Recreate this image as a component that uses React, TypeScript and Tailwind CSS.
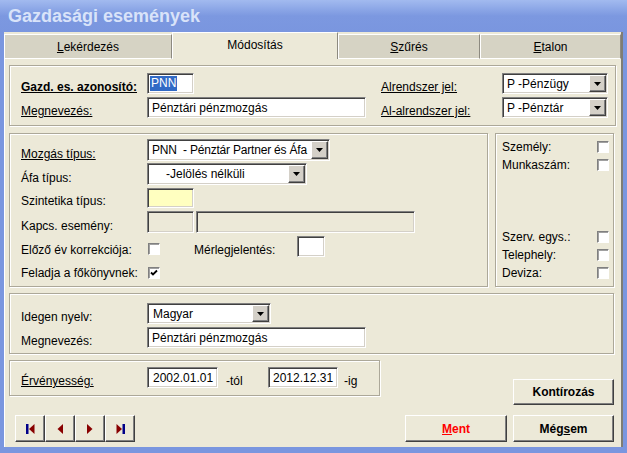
import React from "react";

const sunken =
  "border border-t-[#808080] border-l-[#808080] border-b-white border-r-white shadow-[inset_1px_1px_0_#404040,inset_-1px_-1px_0_#d4d0c8]";
const raised =
  "border border-t-white border-l-white border-b-[#404040] border-r-[#404040] shadow-[inset_-1px_-1px_0_#808080]";
const box =
  "border border-[#aca899] shadow-[inset_1px_1px_0_#ffffff,1px_1px_0_#ffffff]";

function Field({ cls, children }: { cls: string; children?: React.ReactNode }) {
  return (
    <div
      className={`${sunken} ${cls} shrink-0 flex items-center overflow-hidden whitespace-nowrap leading-[14px]`}
    >
      {children}
    </div>
  );
}

function Arrow() {
  return (
    <div
      className={`${raised} w-[17px] h-full bg-[#d4d0c8] flex items-center justify-center shrink-0`}
    >
      <svg width="7" height="4" viewBox="0 0 7 4">
        <polygon points="0,0 7,0 3.5,4" fill="#000" />
      </svg>
    </div>
  );
}

function Select({
  cls,
  pad,
  children,
}: {
  cls: string;
  pad: string;
  children: React.ReactNode;
}) {
  return (
    <div
      className={`${sunken} ${cls} bg-white p-[1px] shrink-0 flex items-stretch overflow-hidden whitespace-nowrap leading-[14px]`}
    >
      <div className={`flex-1 min-w-0 overflow-hidden flex items-center ${pad}`}>
        {children}
      </div>
      <Arrow />
    </div>
  );
}

function Label({ cls, children }: { cls: string; children: React.ReactNode }) {
  return (
    <span className={`${cls} leading-[14px] whitespace-nowrap shrink-0`}>
      {children}
    </span>
  );
}

function Check({ cls, checked }: { cls: string; checked?: boolean }) {
  return (
    <div
      className={`${cls} w-[12px] h-[12px] shrink-0 bg-white border border-t-[#808080] border-l-[#808080] border-b-white border-r-white shadow-[inset_1px_1px_0_#a0a0a0] flex items-center justify-center`}
    >
      {checked && (
        <svg width="8" height="8" viewBox="0 0 8 8">
          <polyline
            points="1,3.5 3,5.5 7,1.5"
            fill="none"
            stroke="#000"
            strokeWidth="1.8"
          />
        </svg>
      )}
    </div>
  );
}

function CheckRow({ label }: { label: string }) {
  return (
    <div className="flex items-center justify-between h-[18px]">
      <span className="leading-[14px]">{label}</span>
      <Check cls="" />
    </div>
  );
}

function Button({ cls, children }: { cls: string; children: React.ReactNode }) {
  return (
    <div
      className={`${raised} ${cls} shrink-0 bg-[#ece9d8] font-bold flex items-center justify-center leading-[14px]`}
    >
      {children}
    </div>
  );
}

function NavIcon({ kind }: { kind: number }) {
  const red = "#880000";
  const blue = "#000088";
  if (kind === 0)
    return (
      <svg width="9" height="10" viewBox="0 0 9 10">
        <rect x="0" y="0" width="2.5" height="10" fill={blue} />
        <polygon points="8.5,0 8.5,10 3,5" fill={red} />
      </svg>
    );
  if (kind === 1)
    return (
      <svg width="6" height="10" viewBox="0 0 6 10">
        <polygon points="6,0 6,10 0.5,5" fill={red} />
      </svg>
    );
  if (kind === 2)
    return (
      <svg width="6" height="10" viewBox="0 0 6 10">
        <polygon points="0,0 0,10 5.5,5" fill={red} />
      </svg>
    );
  return (
    <svg width="9" height="10" viewBox="0 0 9 10">
      <polygon points="0.5,0 0.5,10 6,5" fill={red} />
      <rect x="6.5" y="0" width="2.5" height="10" fill={blue} />
    </svg>
  );
}

function Tab({
  cls,
  active,
  children,
}: {
  cls: string;
  active?: boolean;
  children: React.ReactNode;
}) {
  if (active)
    return (
      <div
        className={`${cls} h-[27px] shrink-0 bg-[#ece9d8] border-t border-l border-t-white border-l-white border-r border-r-[#8d8a80] flex items-center justify-center pb-[2px]`}
      >
        {children}
      </div>
    );
  return (
    <div
      className={`${cls} h-[25px] shrink-0 bg-[#d6d3c4] border-t border-l border-t-white border-l-white border-r border-r-[#8d8a80] border-b border-b-white flex items-center justify-center`}
    >
      {children}
    </div>
  );
}

export default function App() {
  return (
    <div className="w-[627px] h-[453px] bg-[#7a96df] flex flex-col overflow-hidden font-['Liberation_Sans',Arial,sans-serif] text-[12px] text-black">
      <div className="h-[32px] shrink-0 flex items-center pl-[8px] pb-[1px] bg-gradient-to-b from-[#a2baef] via-[#7c98e0] to-[#7a96df]">
        <span className="text-[18px] font-bold text-[#d9e3f9] leading-none">
          Gazdasági események
        </span>
      </div>
      <div className="flex-1 ml-[4px] mr-[4px] mb-[6px] bg-[#ece9d8] border-r-2 border-r-[#7f7d73] flex flex-col">
        <div className="h-[27px] shrink-0 flex items-end">
          <Tab cls="w-[168px]">
            <span>
              <u>L</u>ekérdezés
            </span>
          </Tab>
          <Tab cls="w-[166px]" active>
            <span>Módosítás</span>
          </Tab>
          <Tab cls="w-[142px]">
            <span>
              <u>S</u>zűrés
            </span>
          </Tab>
          <Tab cls="w-[141px]">
            <span>
              <u>E</u>talon
            </span>
          </Tab>
        </div>
        <div className="flex-1 border-l border-l-white pl-[4px] pt-[6px] flex flex-col">
          {/* Box 1 */}
          <div className={`${box} w-[607px] h-[61px] pt-[7px] pl-[11px] flex flex-col`}>
            <div className="flex items-end h-[21px]">
              <Label cls="w-[126px] font-bold underline">Gazd. es. azonosító:</Label>
              <Field cls="w-[47px] h-[21px] bg-white pl-[2px]">
                <span className="bg-[#316ac5] text-white px-[1px] leading-[15px]">PNN</span>
              </Field>
              <Label cls="w-[121px] ml-[187px] underline">Alrendszer jel:</Label>
              <Select cls="w-[106px] h-[21px]" pad="pl-[3px]">
                P -Pénzügy
              </Select>
            </div>
            <div className="flex items-end h-[21px] mt-[3px]">
              <Label cls="w-[126px] underline">Megnevezés:</Label>
              <Field cls="w-[219px] h-[21px] bg-white pl-[4px]">Pénztári pénzmozgás</Field>
              <Label cls="w-[121px] ml-[15px] underline">Al-alrendszer jel:</Label>
              <Select cls="w-[106px] h-[21px]" pad="pl-[3px]">
                P -Pénztár
              </Select>
            </div>
          </div>

          {/* Box 2 + 3 */}
          <div className="flex mt-[7px] gap-[7px]">
            <div className={`${box} w-[479px] h-[154px] pl-[11px] pt-[5px] flex flex-col`}>
              <div className="flex items-end h-[22px]">
                <Label cls="w-[126px] underline">Mozgás típus:</Label>
                <Select cls="w-[183px] h-[22px]" pad="pl-[3px]">
                  <span className="whitespace-pre tracking-[-0.2px]">PNN  - Pénztár Partner és Áfa</span>
                </Select>
              </div>
              <div className="flex items-end h-[22px] mt-[2px]">
                <Label cls="w-[126px]">Áfa típus:</Label>
                <Select cls="w-[160px] h-[22px]" pad="pl-[17px]">
                  -Jelölés nélküli
                </Select>
              </div>
              <div className="flex items-end h-[20px] mt-[3px]">
                <Label cls="w-[126px]">Szintetika típus:</Label>
                <Field cls="w-[47px] h-[20px] bg-[#ffffc0]" />
              </div>
              <div className="flex items-end h-[22px] mt-[3px]">
                <Label cls="w-[126px]">Kapcs. esemény:</Label>
                <Field cls="w-[47px] h-[22px] bg-[#ece9d8]" />
                <Field cls="w-[219px] h-[22px] bg-[#ece9d8] ml-[2px]" />
              </div>
              <div className="flex items-end h-[21px] mt-[3px]">
                <Label cls="w-[126px]">Előző év korrekciója:</Label>
                <Check cls="mb-[2px] ml-[1px]" />
                <Label cls="w-[103px] ml-[34px]">Mérlegjelentés:</Label>
                <Field cls="w-[28px] h-[21px] bg-white" />
              </div>
              <div className="flex items-end h-[14px] mt-[9px]">
                <Label cls="w-[126px]">Feladja a főkönyvnek:</Label>
                <Check cls="mb-[1px] ml-[1px]" checked />
              </div>
            </div>
            <div
              className={`${box} w-[119px] h-[154px] pl-[6px] pr-[4px] pt-[4px] pb-[4px] flex flex-col justify-between`}
            >
              <div>
                <CheckRow label="Személy:" />
                <CheckRow label="Munkaszám:" />
              </div>
              <div>
                <CheckRow label="Szerv. egys.:" />
                <CheckRow label="Telephely:" />
                <CheckRow label="Deviza:" />
              </div>
            </div>
          </div>

          {/* Box 4 */}
          <div className={`${box} w-[605px] h-[61px] mt-[6px] pl-[11px] pt-[9px] flex flex-col gap-[3px]`}>
            <div className="flex items-end h-[21px]">
              <Label cls="w-[126px]">Idegen nyelv:</Label>
              <Select cls="w-[124px] h-[21px]" pad="pl-[4px]">
                Magyar
              </Select>
            </div>
            <div className="flex items-end h-[21px]">
              <Label cls="w-[126px]">Megnevezés:</Label>
              <Field cls="w-[219px] h-[21px] bg-white pl-[4px]">Pénztári pénzmozgás</Field>
            </div>
          </div>

          {/* Box 5 + Kontírozás */}
          <div className="flex items-start mt-[6px]">
            <div className={`${box} w-[371px] h-[36px] pl-[11px] pt-[6px]`}>
              <div className="flex items-end h-[21px]">
                <Label cls="w-[126px] underline">Érvényesség:</Label>
                <Field cls="w-[71px] h-[21px] bg-white pl-[5px]">2002.01.01</Field>
                <Label cls="w-[50px] pl-[8px]">-tól</Label>
                <Field cls="w-[70px] h-[21px] bg-white pl-[4px]">2012.12.31</Field>
                <Label cls="w-[30px] pl-[6px]">-ig</Label>
              </div>
            </div>
            <Button cls="ml-[133px] mt-[19px] w-[101px] h-[26px]">Kontírozás</Button>
          </div>

          {/* Bottom row */}
          <div className="flex items-start mt-[10px]">
            <div className="flex ml-[6px]">
              {[0, 1, 2, 3].map((k) => (
                <div
                  key={k}
                  className={`${raised} w-[30px] h-[27px] bg-[#ece9d8] flex items-center justify-center`}
                >
                  <NavIcon kind={k} />
                </div>
              ))}
            </div>
            <Button cls="ml-[270px] w-[102px] h-[27px] text-[#ff0000]">
              <span>
                <u>M</u>ent
              </span>
            </Button>
            <Button cls="ml-[6px] w-[101px] h-[27px]">
              <span>
                Még<u>s</u>em
              </span>
            </Button>
          </div>
        </div>
      </div>
    </div>
  );
}
